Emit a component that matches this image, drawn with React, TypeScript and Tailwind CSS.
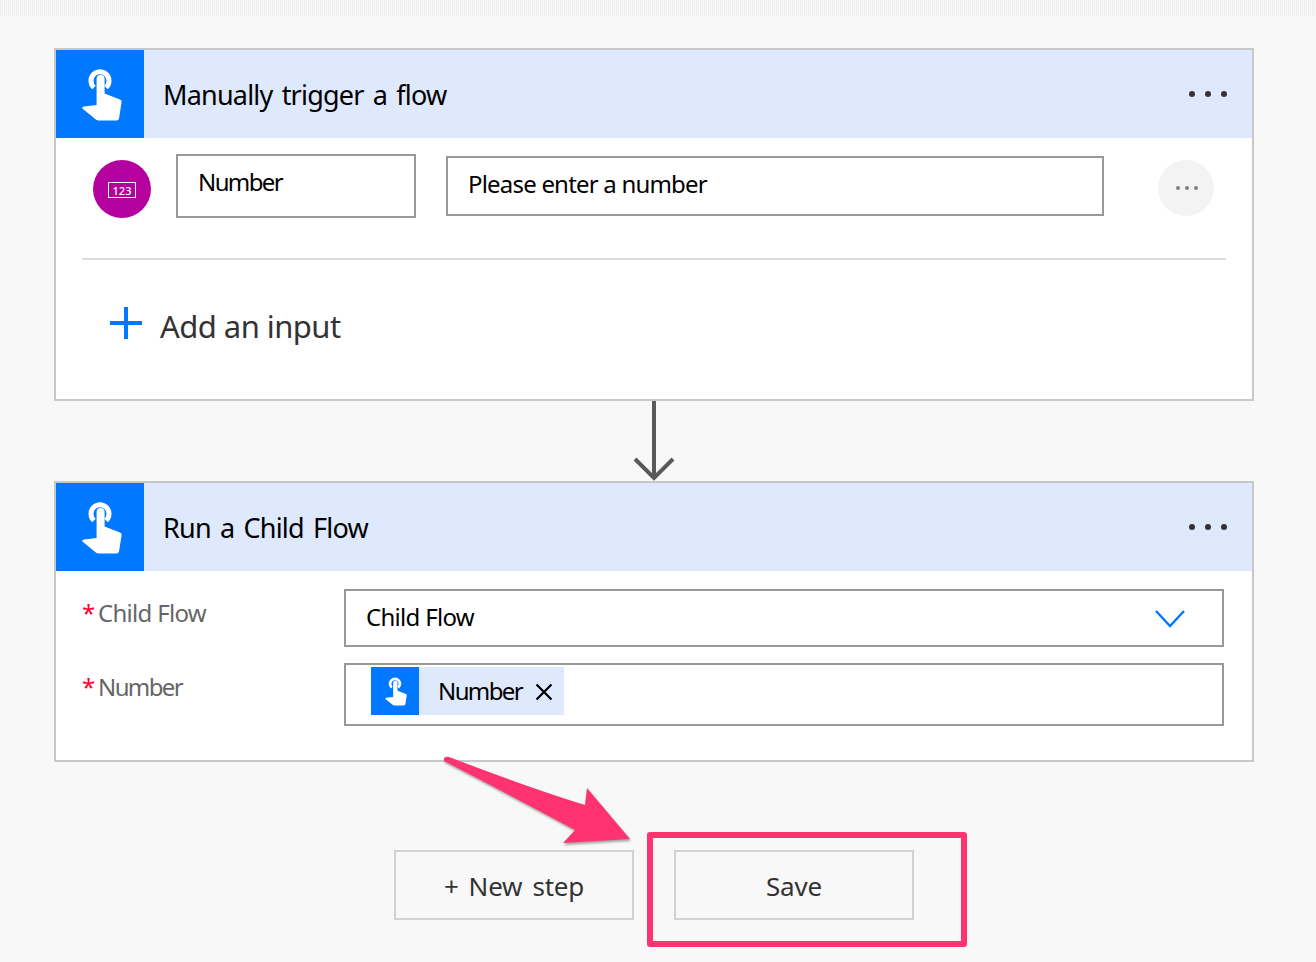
import React from "react";

const font = { fontFamily: '"Noto Sans", "Open Sans", sans-serif' };

function Touch({ className }: { className: string }) {
  return (
    <svg viewBox="0 0 88 88" className={className}>
      <path d="M38 37.5A9 9 0 1 1 50 37.5" fill="none" stroke="#fff" strokeWidth="5" />
      <path
        d="M40.6 29a4 4 0 0 1 8 0V43.5L64 49.5Q65.8 50.2 65.6 52L63.2 67.5Q62.8 70.5 60.5 70.5H43Q41 70.5 39.5 69.3L27 59Q25 57 28 56.4L40.6 55Z"
        fill="#fff"
      />
    </svg>
  );
}

function Dots() {
  return (
    <div className="flex gap-[10px] mr-[25px]">
      <span className="w-[6px] h-[6px] rounded-full bg-[#333333]" />
      <span className="w-[6px] h-[6px] rounded-full bg-[#333333]" />
      <span className="w-[6px] h-[6px] rounded-full bg-[#333333]" />
    </div>
  );
}

function Header({ title }: { title: string }) {
  return (
    <div className="flex items-center h-[88px] bg-[#dee9fd]">
      <div className="w-[88px] h-[88px] bg-[#0078ff] shrink-0">
        <Touch className="w-[88px] h-[88px]" />
      </div>
      <div className="ml-[19px] pt-[3px] flex-1 text-[27px] text-black tracking-[-0.8px] [word-spacing:3px]">{title}</div>
      <Dots />
    </div>
  );
}

function Label({ text, h }: { text: string; h: string }) {
  return (
    <div className={`w-[288px] shrink-0 pl-[26px] flex items-start text-[24px] leading-[32px] text-[#666666] ${h}`}>
      <span className="text-[#ff0033] w-[16px]">*</span>
      <span>{text}</span>
    </div>
  );
}

export default function App() {
  return (
    <div style={font} className="relative w-[1316px] h-[962px] overflow-hidden bg-[#f8f8f8]">
      <div className="h-[16px] bg-[repeating-linear-gradient(90deg,#f0f0f0_0,#f0f0f0_1px,#f7f7f7_1px,#f7f7f7_2px)]" />
      <div className="w-[1200px] ml-[54px] mt-[32px]">
        <div className="h-[353px] border-2 border-[#c8c8c8] bg-white">
          <Header title="Manually trigger a flow" />
          <div className="flex items-start pl-[37px] pt-[16px]">
            <div className="mt-[6px] w-[58px] h-[58px] rounded-full bg-[#b4009e] flex items-center justify-center">
              <div className="mt-[2px] w-[28px] h-[16px] border-[1.5px] border-white flex items-center justify-center text-[11px] leading-none font-medium text-white">
                123
              </div>
            </div>
            <div className="ml-[25px] w-[240px] h-[64px] border-2 border-[#999999] pl-[20px] pt-[10px] text-[24px] leading-[32px] text-black tracking-[-1.6px]">
              Number
            </div>
            <div className="mt-[2px] ml-[30px] w-[658px] h-[60px] border-2 border-[#999999] pl-[20px] pt-[10px] text-[24px] leading-[32px] text-black tracking-[-0.8px]">
              Please enter a number
            </div>
            <div className="mt-[6px] ml-[54px] w-[56px] h-[56px] rounded-full bg-[#f3f3f3] flex items-center justify-center gap-[5px] pl-[1px]">
              <span className="w-[4px] h-[4px] rounded-full bg-[#808080]" />
              <span className="w-[4px] h-[4px] rounded-full bg-[#808080]" />
              <span className="w-[4px] h-[4px] rounded-full bg-[#808080]" />
            </div>
          </div>
          <div className="mt-[40px] mx-[26px] h-[2px] bg-[#dcdcdc]" />
          <div className="flex items-start mt-[47px] ml-[54px]">
            <svg viewBox="0 0 32 32" className="w-[32px] h-[32px] text-[#0078ff]">
              <path d="M16 0V32M0 16H32" stroke="currentColor" strokeWidth="4" />
            </svg>
            <span className="ml-[18px] mt-[-1px] text-[31px] leading-[40px] text-[#333333] tracking-[-0.55px]">Add an input</span>
          </div>
        </div>

        <svg viewBox="0 0 42 80" className="block mx-auto w-[42px] h-[80px] text-[#595959]">
          <path d="M21 0V78M2 58L21 77L40 58" fill="none" stroke="currentColor" strokeWidth="4" />
        </svg>

        <div className="h-[281px] border-2 border-[#c8c8c8] bg-white">
          <Header title="Run a Child Flow" />
          <div className="flex mt-[18px]">
            <Label text="Child Flow" h="h-[58px] pt-[8px] tracking-[-0.7px]" />
            <div className="w-[880px] h-[58px] border-2 border-[#999999] flex items-center justify-between pl-[20px] pr-[36px] text-[24px] text-black tracking-[-0.7px]">
              <span className="mt-[-2px]">Child Flow</span>
              <svg viewBox="0 0 32 20" className="mt-[2px] w-[32px] h-[20px] text-[#0078ff]">
                <path d="M2 2L16 17L30 2" fill="none" stroke="currentColor" strokeWidth="2.4" />
              </svg>
            </div>
          </div>
          <div className="flex mt-[16px]">
            <Label text="Number" h="h-[63px] pt-[8px] tracking-[-1.6px]" />
            <div className="w-[880px] h-[63px] border-2 border-[#999999] pl-[25px] pt-[2px]">
              <div className="inline-flex items-center h-[48px] w-[193px] bg-[#dee9fd]">
                <div className="w-[48px] h-[48px] bg-[#0078ff]">
                  <Touch className="w-[48px] h-[48px]" />
                </div>
                <span className="ml-[19px] text-[24px] text-black tracking-[-1.6px]">Number</span>
                <svg viewBox="0 0 18 18" className="ml-[13px] mt-[2px] w-[18px] h-[18px] text-black">
                  <path d="M1.5 1.5L16.5 16.5M16.5 1.5L1.5 16.5" stroke="currentColor" strokeWidth="2.2" />
                </svg>
              </div>
            </div>
          </div>
        </div>

        <div className="flex mt-[88px] ml-[340px] gap-[40px]">
          <div className="w-[240px] h-[70px] pt-[2px] border-2 border-[#d2d2d2] flex items-center justify-center text-[26px] text-[#333333] tracking-[-0.2px] [word-spacing:3.5px]">
            + New step
          </div>
          <div className="w-[240px] h-[70px] pt-[2px] border-2 border-[#d2d2d2] flex items-center justify-center text-[26px] text-[#333333] tracking-[-0.2px]">
            Save
          </div>
        </div>
      </div>

      <div className="absolute left-[647px] top-[832px] w-[320px] h-[115px] border-[6px] border-[#ff3370] rounded-[3px]" />
      <svg viewBox="0 0 1316 962" className="absolute left-0 top-0 w-[1316px] h-[962px] pointer-events-none drop-shadow-[1px_2px_1px_rgba(0,0,0,0.35)]">
        <path
          d="M444 761Q443 756 449 757Q530 788 585 805L587 788L630 839L563 843L575 830Q510 795 444 761Z"
          fill="#ff3370"
        />
      </svg>
    </div>
  );
}
